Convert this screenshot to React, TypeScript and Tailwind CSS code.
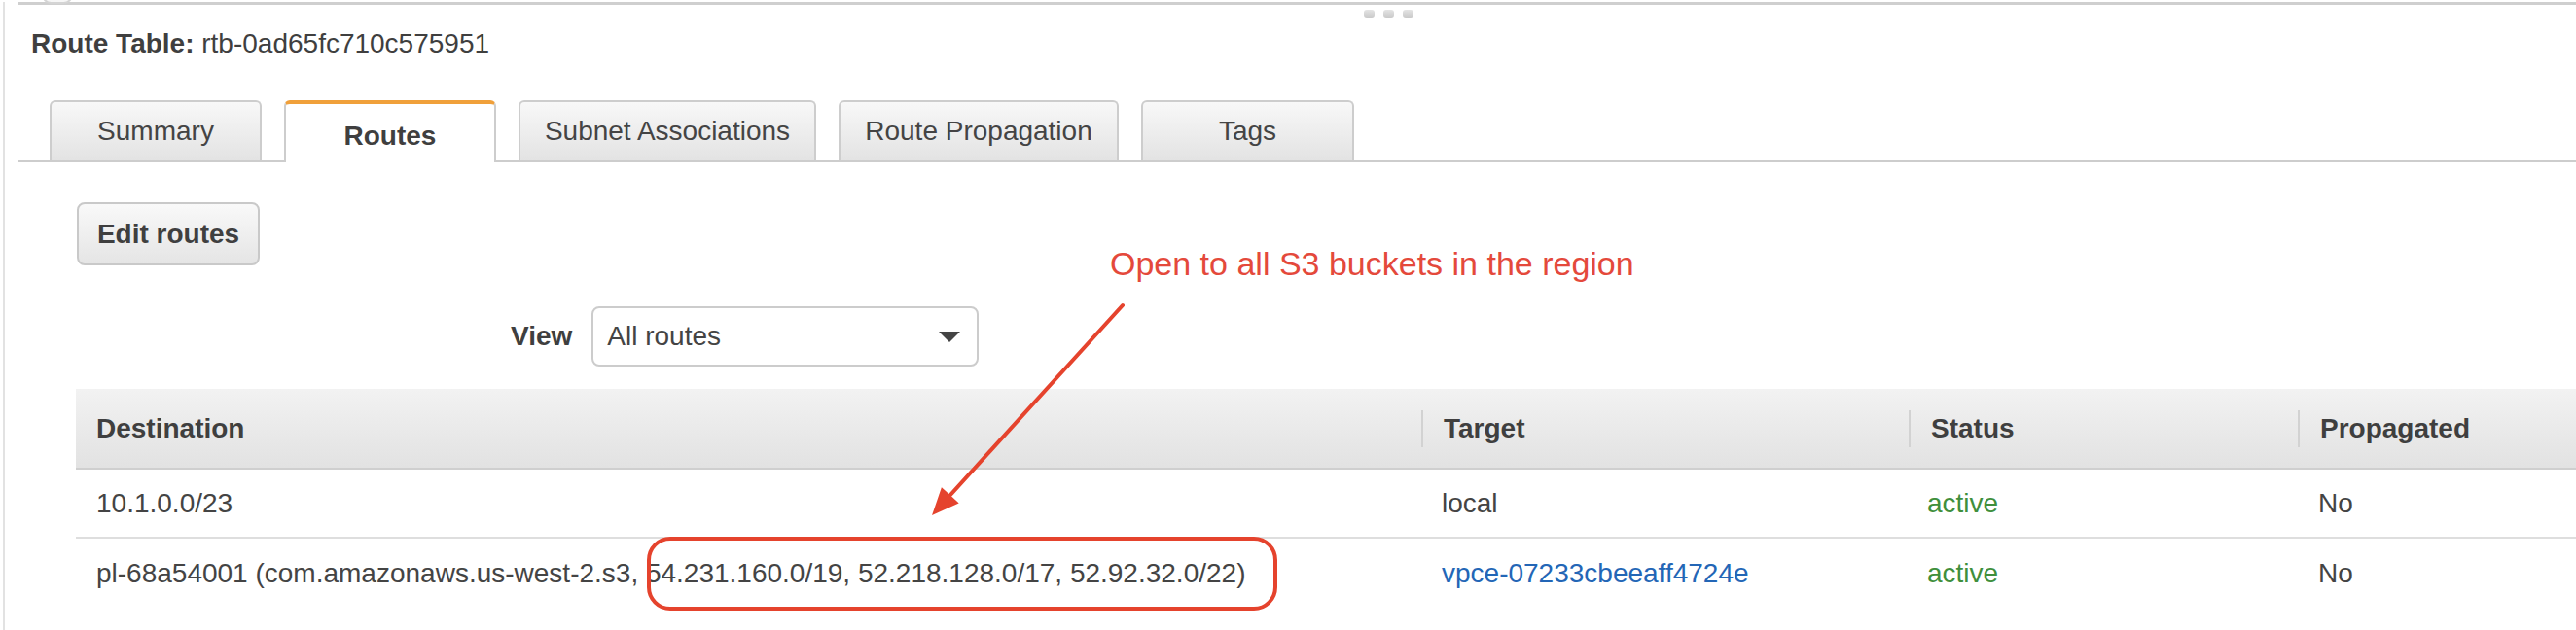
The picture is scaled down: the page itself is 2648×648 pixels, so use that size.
import React from 'react';

const tabs = [
  { label: 'Summary', w: 'w-[218px]' },
  { label: 'Routes', w: 'w-[218px]', active: true },
  { label: 'Subnet Associations', w: 'w-[306px]' },
  { label: 'Route Propagation', w: 'w-[288px]' },
  { label: 'Tags', w: 'w-[219px]' },
];

const routes = [
  { dest: '10.1.0.0/23', target: 'local', link: false, status: 'active', prop: 'No' },
  {
    dest: 'pl-68a54001 (com.amazonaws.us-west-2.s3, 54.231.160.0/19, 52.218.128.0/17, 52.92.32.0/22)',
    target: 'vpce-07233cbeeaff4724e',
    link: true,
    status: 'active',
    prop: 'No',
  },
];

function Grip() {
  return (
    <div className="flex gap-[9px] pl-[1397px] mt-[5px] h-[8px]">
      {[0, 1, 2].map(i => (
        <span key={i} className="w-[11px] h-[8px] rounded-[3px] bg-gradient-to-b from-[#e4e4e4] to-[#c9c9c9]" />
      ))}
    </div>
  );
}

export default function App() {
  return (
    <div className="relative w-[2648px] h-[648px] overflow-hidden bg-white text-[#444] font-['Liberation_Sans',Arial,sans-serif]">
      <div className="ml-[3px] h-full border-l-2 border-[#e2e2e2]">
        <div className="mt-[2px] ml-[13px] h-[3px] bg-[#cfcfcf]" />
        <Grip />

        <div className="mt-[11px] pl-[27px] text-[28px] leading-[32px] text-[#3f3f3f]">
          <span className="font-bold">Route Table:</span> rtb-0ad65fc710c575951
        </div>

        {/* tabs */}
        <div className="mt-[42px] ml-[13px] pl-[33px] flex items-end gap-[23px] border-b-2 border-[#cdcdcd]">
          {tabs.map(t =>
            t.active ? (
              <div key={t.label}
                className={`${t.w} h-[64px] -mb-[2px] flex items-center justify-center pt-[6px] bg-white border-2 border-b-0 border-[#cdcdcd] border-t-4 border-t-[#f0a03a] rounded-t-[6px] text-[28px] font-bold text-[#3f3f3f]`}>
                {t.label}
              </div>
            ) : (
              <div key={t.label}
                className={`${t.w} h-[62px] flex items-center justify-center bg-gradient-to-b from-[#f8f8f8] to-[#e3e3e3] border-2 border-b-0 border-[#cdcdcd] rounded-t-[6px] text-[28px] text-[#444]`}>
                {t.label}
              </div>
            )
          )}
        </div>

        <button className="mt-[41px] ml-[74px] w-[188px] h-[65px] flex items-center justify-center rounded-[8px] border-2 border-[#c9c9c9] bg-gradient-to-b from-[#f9f9f9] to-[#e5e5e5] text-[28px] font-bold text-[#3f3f3f]">
          Edit routes
        </button>

        <div className="mt-[42px] ml-[520px] flex items-center gap-[20px]">
          <span className="text-[28px] font-bold text-[#3f3f3f]">View</span>
          <div className="w-[398px] h-[62px] flex items-center justify-between pl-[14px] pr-[17px] rounded-[8px] border-2 border-[#cccccc] bg-white text-[28px] text-[#444]">
            <span>All routes</span>
            <svg width="22" height="11" viewBox="0 0 22 11">
              <path d="M0 0 H22 L11 11 Z" fill="#444" />
            </svg>
          </div>
        </div>

        {/* routes table */}
        <div className="mt-[23px] ml-[73px] w-[2600px] text-[28px]">
          <div className="flex h-[83px] items-center bg-gradient-to-b from-[#f2f2f2] to-[#e2e2e2] border-b-2 border-[#cfcfcf] font-bold text-[#3f3f3f]">
            <div className="w-[1383px] pl-[21px]">Destination</div>
            <div className="w-[501px] flex items-center">
              <span className="w-[2px] h-[38px] bg-[#d2d2d2]" />
              <span className="pl-[21px]">Target</span>
            </div>
            <div className="w-[400px] flex items-center">
              <span className="w-[2px] h-[38px] bg-[#d2d2d2]" />
              <span className="pl-[21px]">Status</span>
            </div>
            <div className="flex-1 flex items-center">
              <span className="w-[2px] h-[38px] bg-[#d2d2d2]" />
              <span className="pl-[21px]">Propagated</span>
            </div>
          </div>
          {routes.map((r, i) => (
            <div key={r.dest}
              className={`flex items-center ${i === 0 ? 'h-[71px] border-b-2 border-[#dedede]' : 'h-[72px]'}`}>
              <div className="w-[1383px] pl-[21px] text-[#444] whitespace-nowrap">{r.dest}</div>
              <div className={`w-[501px] pl-[21px] ${r.link ? 'text-[#2366b6]' : 'text-[#444]'}`}>{r.target}</div>
              <div className="w-[400px] pl-[19px] text-[#3f8f3c]">{r.status}</div>
              <div className="flex-1 pl-[21px] text-[#444]">{r.prop}</div>
            </div>
          ))}
        </div>
      </div>

      {/* little rounded nub at the top-left edge */}
      <div className="absolute left-[43px] top-[-15px] w-[32px] h-[19px] rounded-full border-2 border-[#d4d4d4] bg-[#f6f6f6]" />

      {/* red annotation */}
      <div className="absolute left-[1141px] top-[254px] text-[34px] leading-[34px] text-[#e4493b] whitespace-nowrap">
        Open to all S3 buckets in the region
      </div>
      <svg className="absolute left-0 top-0 pointer-events-none" width="2648" height="648" viewBox="0 0 2648 648">
        <line x1="1154" y1="314" x2="977" y2="509" stroke="#e5432d" strokeWidth="4" strokeLinecap="round" />
        <path d="M958 530 L985.7 517.4 L967.9 501.2 Z" fill="#e5432d" />
        <rect x="667" y="554" width="644" height="72" rx="22" fill="none" stroke="#e5432d" strokeWidth="4" />
      </svg>
    </div>
  );
}
